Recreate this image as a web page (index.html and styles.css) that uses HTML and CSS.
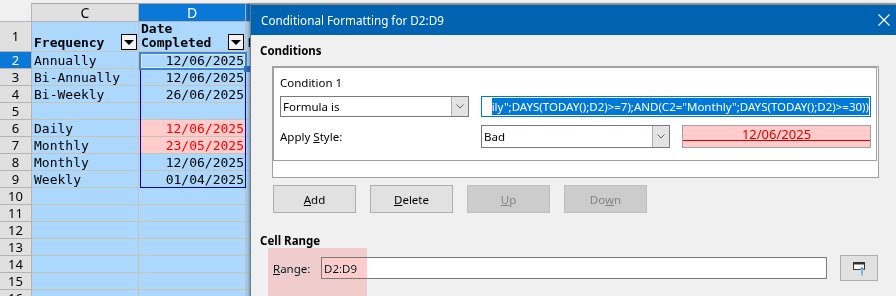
FILE: index.html
```html
<!DOCTYPE html>
<html lang="en">
<head>
    <meta charset="UTF-8">
    <title>Conditional Formatting for D2:D9</title>
    <link rel="stylesheet" href="styles.css">
</head>
<body>
    <div class="sheet">
        <div class="row head">
            <div class="corner"></div>
            <div class="ch">C</div>
            <div class="ch on">D</div>
            <div class="ch on rest"></div>
        </div>
        <div class="row tall">
            <div class="rh">1</div>
            <div class="cell h1"><span>Frequency</span><span class="drop"></span></div>
            <div class="cell h1"><span>Date<br>Completed</span><span class="drop"></span></div>
            <div class="cell h1 rest"><span>N</span></div>
        </div>
        <div class="row">
            <div class="rh on">2</div>
            <div class="cell">Annually</div>
            <div class="cell num">12/06/2025</div>
            <div class="cell rest"></div>
        </div>
        <div class="row">
            <div class="rh">3</div>
            <div class="cell">Bi-Annually</div>
            <div class="cell num">12/06/2025</div>
            <div class="cell rest"></div>
        </div>
        <div class="row">
            <div class="rh">4</div>
            <div class="cell">Bi-Weekly</div>
            <div class="cell num">26/06/2025</div>
            <div class="cell rest"></div>
        </div>
        <div class="row">
            <div class="rh">5</div>
            <div class="cell"></div>
            <div class="cell num"></div>
            <div class="cell rest"></div>
        </div>
        <div class="row">
            <div class="rh">6</div>
            <div class="cell">Daily</div>
            <div class="cell num bad">12/06/2025</div>
            <div class="cell rest"></div>
        </div>
        <div class="row">
            <div class="rh">7</div>
            <div class="cell">Monthly</div>
            <div class="cell num bad">23/05/2025</div>
            <div class="cell rest"></div>
        </div>
        <div class="row">
            <div class="rh">8</div>
            <div class="cell">Monthly</div>
            <div class="cell num">12/06/2025</div>
            <div class="cell rest"></div>
        </div>
        <div class="row">
            <div class="rh">9</div>
            <div class="cell">Weekly</div>
            <div class="cell num">01/04/2025</div>
            <div class="cell rest"></div>
        </div>
        <div class="row"><div class="rh">10</div><div class="cell"></div><div class="cell"></div><div class="cell rest"></div></div>
        <div class="row"><div class="rh">11</div><div class="cell"></div><div class="cell"></div><div class="cell rest"></div></div>
        <div class="row"><div class="rh">12</div><div class="cell"></div><div class="cell"></div><div class="cell rest"></div></div>
        <div class="row"><div class="rh">13</div><div class="cell"></div><div class="cell"></div><div class="cell rest"></div></div>
        <div class="row"><div class="rh">14</div><div class="cell"></div><div class="cell"></div><div class="cell rest"></div></div>
        <div class="row"><div class="rh">15</div><div class="cell"></div><div class="cell"></div><div class="cell rest"></div></div>
        <div class="row"><div class="rh">16</div><div class="cell"></div><div class="cell"></div><div class="cell rest"></div></div>

        <div class="range"></div>
        <div class="cursor"></div>
        <div class="handle"></div>
    </div>

    <div class="dialog">
        <div class="titlebar">
            <span>Conditional Formatting for D2:D9</span>
            <span class="close">
                <svg width="12" height="12" viewBox="0 0 12 12"><path d="M0.5 0.5l11 11M11.5 0.5l-11 11" stroke="#fff" stroke-width="1.2"/></svg>
            </span>
        </div>
        <div class="content">
            <div class="group-title">Conditions</div>
            <div class="list">
                <div class="entry">
                    <div class="entry-name">Condition 1</div>
                    <div class="entry-grid">
                        <div class="select">
                            <span class="val">Formula is</span>
                            <span class="arrow"><svg width="8" height="5" viewBox="0 0 8 5"><path d="M0.5 0.5l3.5 3.5 3.5-3.5" fill="none" stroke="#606060"/></svg></span>
                        </div>
                        <div class="formula"><span>ily";DAYS(TODAY();D2)&gt;=7);AND(C2="Monthly";DAYS(TODAY();D2)&gt;=30))</span></div>
                        <div class="label"><span>Apply <u>S</u>tyle:</span></div>
                        <div class="select">
                            <span class="val">Bad</span>
                            <span class="arrow"><svg width="8" height="5" viewBox="0 0 8 5"><path d="M0.5 0.5l3.5 3.5 3.5-3.5" fill="none" stroke="#606060"/></svg></span>
                        </div>
                        <div class="preview"><div class="pv">12/06/2025</div></div>
                    </div>
                </div>
            </div>
            <div class="btns">
                <button><u>A</u>dd</button>
                <button><u>D</u>elete</button>
                <button disabled><u>U</u>p</button>
                <button disabled>Do<u>w</u>n</button>
            </div>
            <div class="group-title cr">Cell Range</div>
            <div class="range-row">
                <span class="range-label"><u>R</u>ange:</span>
                <div class="range-input">D2:D9</div>
                <button class="shrink">
                    <svg width="16" height="16" viewBox="0 0 16 16">
                        <rect x="2.5" y="2.5" width="11" height="7" fill="#fff" stroke="#333"/>
                        <rect x="2" y="2" width="12" height="2.5" fill="#333"/>
                        <path d="M11 8v8" stroke="#e1e1e1" stroke-width="3"/>
                        <path d="M11 7.5v8M8.5 10l2.5-2.5 2.5 2.5" fill="none" stroke="#1e88e5"/>
                    </svg>
                </button>
                <div class="hilite"></div>
            </div>
        </div>
    </div>
</body>
</html>
```

FILE: styles.css
```css
html, body {
    margin: 0;
    width: 896px;
    height: 296px;
    overflow: hidden;
}
body {
    position: relative;
    background: #f0f0f0;
    font-family: "DejaVu Sans Mono", monospace;
}

/* spreadsheet */
.sheet {
    position: relative;
    padding-top: 3px;
}
.row {
    display: flex;
    height: 17px;
}
.row.head {
    height: 19px;
}
.row.tall {
    height: 30px;
}
.corner {
    width: 32px;
    flex: none;
    box-sizing: border-box;
    border-right: 1px solid #b4b4b4;
    border-bottom: 1px solid #b4b4b4;
}
.ch {
    width: 107px;
    flex: none;
    box-sizing: border-box;
    background: #e0e0e0;
    border-top: 1px solid #a8a8a8;
    border-right: 1px solid #b4b4b4;
    border-bottom: 1px solid #b4b4b4;
    font: 14px/17px "Noto Sans", sans-serif;
    display: flex;
    align-items: center;
    justify-content: center;
}
.ch.on {
    background: #0a78d7;
    color: #fff;
}
.rh {
    width: 32px;
    flex: none;
    box-sizing: border-box;
    background: #e0e0e0;
    border-right: 1px solid #b4b4b4;
    border-bottom: 1px solid #b4b4b4;
    font: 13px/15px "Noto Sans", sans-serif;
    display: flex;
    align-items: center;
    justify-content: center;
}
.rh.on {
    background: #0a78d7;
    color: #fff;
}
.cell {
    width: 107px;
    flex: none;
    box-sizing: border-box;
    background: #abd8fc;
    border-right: 1px solid #c9c2b6;
    border-bottom: 1px solid #c9c2b6;
    font-size: 13px;
    line-height: 15px;
    padding: 0 1px 0 2px;
    display: flex;
    align-items: center;
    white-space: nowrap;
    overflow: hidden;
}
.rest {
    flex: 1;
    width: auto;
}
.cell.h1 {
    font-weight: bold;
    line-height: 14px;
    align-items: flex-end;
    justify-content: space-between;
    padding-bottom: 1px;
}
.num {
    justify-content: flex-end;
}
.bad {
    background: #ffcccc;
    color: #ff0000;
}
.drop {
    width: 16px;
    height: 16px;
    flex: none;
    box-sizing: border-box;
    border: 1px solid #000;
    background: #f2f2f2;
    display: flex;
    align-items: center;
    justify-content: center;
}
.drop::after {
    content: "";
    border-left: 5px solid transparent;
    border-right: 5px solid transparent;
    border-top: 5px solid #000;
}
.range {
    position: absolute;
    left: 140px;
    top: 52px;
    width: 106px;
    height: 136px;
    box-sizing: border-box;
    border: 1px solid #0000cc;
}
.cursor {
    position: absolute;
    left: 139px;
    top: 52px;
    width: 108px;
    height: 18px;
    box-sizing: border-box;
    border: 2px solid #3d85d2;
    box-shadow: inset 0 0 0 1px #d9eeff;
}
.handle {
    position: absolute;
    left: 244px;
    top: 66px;
    width: 6px;
    height: 6px;
    background: #2b73c9;
}

/* dialog */
.dialog {
    position: absolute;
    left: 250px;
    top: 4px;
    width: 656px;
    height: 300px;
    border-left: 1px solid #6f7a86;
    border-top: 1px solid #8a8a8a;
    background: #f0f0f0;
    box-shadow: -2px 0 3px rgba(0, 0, 0, 0.25);
    font: 11.5px "Noto Sans", sans-serif;
    color: #000;
}
.titlebar {
    height: 30px;
    background: #0063b1;
    color: #fff;
    display: flex;
    align-items: center;
    justify-content: space-between;
    padding-left: 10px;
    font-size: 11.7px;
}
.close {
    width: 46px;
    height: 30px;
    display: flex;
    align-items: center;
    justify-content: center;
}
.content {
    padding: 8px 0 0 9px;
}
.group-title {
    font-weight: bold;
    line-height: 16px;
}
.group-title.cr {
    margin-top: 20px;
}
.list {
    margin: 7px 0 0 12px;
    width: 607px;
    height: 112px;
    box-sizing: border-box;
    border: 1px solid #a0a0a0;
    background: #fff;
}
.entry {
    height: 94px;
    margin-right: 1px;
    box-sizing: border-box;
    border: 1px solid #a0a0a0;
    padding: 7px 6px 0 6px;
}
.entry-name {
    line-height: 16px;
}
.entry-grid {
    margin-top: 5px;
    display: grid;
    grid-template-columns: 189px 189px 189px;
    grid-template-rows: 21px 23px;
    column-gap: 12px;
    row-gap: 8px;
}
.select {
    display: flex;
    box-sizing: border-box;
    border: 1px solid #7a7a7a;
    background: #fff;
}
.select .val {
    flex: 1;
    padding-left: 2px;
    display: flex;
    align-items: center;
}
.select .arrow {
    width: 17px;
    box-sizing: border-box;
    background: #e3e3e3;
    border-left: 1px solid #adadad;
    display: flex;
    align-items: center;
    justify-content: center;
}
.formula {
    grid-column: span 2;
    box-sizing: border-box;
    border: 1px solid #0078d7;
    padding: 1px;
    background: #fff;
    display: flex;
    justify-content: flex-end;
    overflow: hidden;
}
.formula span {
    background: #0078d7;
    color: #fff;
    white-space: nowrap;
    display: flex;
    align-items: center;
    flex: none;
}
.label {
    display: flex;
    align-items: center;
}
.preview {
    box-sizing: border-box;
    border: 1px solid #a0a0a0;
    background: #ffcccc;
    display: flex;
    align-items: flex-end;
    padding-bottom: 6px;
}
.pv {
    width: 100%;
    text-align: center;
    font-size: 13px;
    line-height: 11px;
    color: #e00000;
    border-bottom: 1px solid #d00000;
}
.btns {
    display: flex;
    gap: 14px;
    margin: 7px 0 0 13px;
}
button {
    width: 83px;
    height: 28px;
    box-sizing: border-box;
    border: 1px solid #adadad;
    background: #e1e1e1;
    font: 11.5px "Noto Sans", sans-serif;
    color: #000;
    padding: 0;
}
button:disabled {
    background: #cccccc;
    border-color: #bfbfbf;
    color: #838383;
}
.range-row {
    position: relative;
    margin-top: 6px;
    padding-left: 13px;
    display: flex;
    align-items: center;
}
.range-label {
    width: 48px;
}
.range-input {
    width: 506px;
    height: 22px;
    box-sizing: border-box;
    border: 1px solid #7a7a7a;
    background: #fff;
    padding-left: 2px;
    display: flex;
    align-items: center;
}
.shrink {
    margin-left: 13px;
    width: 38px;
    height: 26px;
    display: flex;
    align-items: center;
    justify-content: center;
}
.hilite {
    position: absolute;
    left: 8px;
    top: -7px;
    width: 99px;
    height: 60px;
    background: #ffcccc;
    mix-blend-mode: darken;
}
```
